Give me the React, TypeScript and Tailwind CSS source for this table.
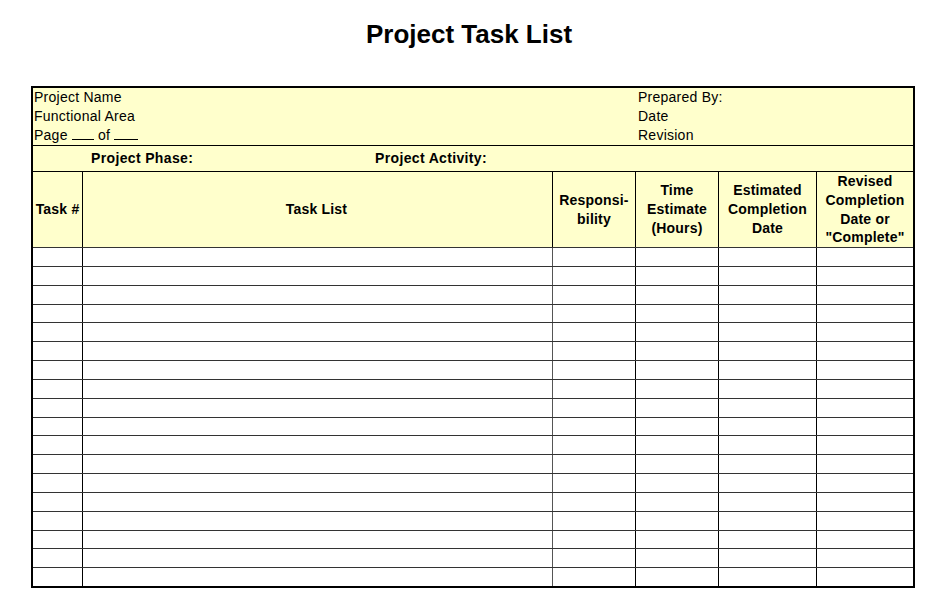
import React from "react";

// pitch of every body row (top rule included), so the lines land where the sheet has them
const rowHeights: number[] = [19, 19, 19, 18, 19, 19, 19, 19, 19, 18, 19, 19, 19, 19, 19, 18, 19, 19];

const BodyRow: React.FC<{ h: number }> = ({ h }) => (
    <div className={`flex border-t border-[#333] bg-white ${h === 18 ? "h-[18px]" : "h-[19px]"}`}>
        <div className="w-[49px]" />
        <div className="w-[470px] border-l border-black" />
        <div className="w-[83px] border-l border-[#555]" />
        <div className="w-[83px] border-l border-black" />
        <div className="w-[98px] border-l border-black" />
        <div className="w-[97px] border-l border-black" />
    </div>
);

const App: React.FC = () => {
    return (
        <div className="w-[944px] h-[615px] bg-white text-black font-['Liberation_Sans',Arial,sans-serif]">
            {/* Title */}
            <div className="h-[86px] pt-[18px] pr-[6px] text-center">
                <h1 className="text-[26px] leading-[32px] font-bold">Project Task List</h1>
            </div>

            {/* Sheet */}
            <div className="ml-[31px] w-[884px] border-2 border-black">
                {/* Info block */}
                <div className="flex h-[57px] bg-[#ffffcc] text-[14px] leading-[19px] tracking-[0.25px]">
                    <div className="w-[605px] pl-[1px]">
                        <div>Project Name</div>
                        <div>Functional Area</div>
                        <div>
                            Page <span className="inline-block w-[22px] border-b border-black align-baseline" /> of{" "}
                            <span className="inline-block w-[24px] border-b border-black align-baseline" />
                        </div>
                    </div>
                    <div className="flex-1">
                        <div>Prepared By:</div>
                        <div>Date</div>
                        <div>Revision</div>
                    </div>
                </div>

                {/* Phase / activity */}
                <div className="flex items-center h-[26px] border-t border-black bg-[#ffffcc] text-[14px] font-bold tracking-[0.35px]">
                    <div className="w-[342px] pl-[58px]">Project Phase:</div>
                    <div>Project Activity:</div>
                </div>

                {/* Column headers */}
                <div className="flex h-[76px] border-t border-black bg-[#ffffcc] text-[14px] font-bold leading-[19px] tracking-[0.2px] text-center">
                    <div className="w-[49px] flex items-center justify-center">Task #</div>
                    <div className="w-[470px] border-l border-black flex items-center justify-center pr-[2px]">Task List</div>
                    <div className="w-[83px] border-l border-black flex items-center justify-center">
                        <div>Responsi-<br />bility</div>
                    </div>
                    <div className="w-[83px] border-l border-black flex items-center justify-center">
                        <div>Time<br />Estimate<br />(Hours)</div>
                    </div>
                    <div className="w-[98px] border-l border-black flex items-center justify-center">
                        <div>Estimated<br />Completion<br />Date</div>
                    </div>
                    <div className="w-[97px] border-l border-black flex items-center justify-center leading-[18.6px]">
                        <div>Revised<br />Completion<br />Date or<br />"Complete"</div>
                    </div>
                </div>

                {/* Body rows */}
                {rowHeights.map((h, i) => (
                    <BodyRow key={i} h={h} />
                ))}
            </div>
        </div>
    );
};

export default App;
